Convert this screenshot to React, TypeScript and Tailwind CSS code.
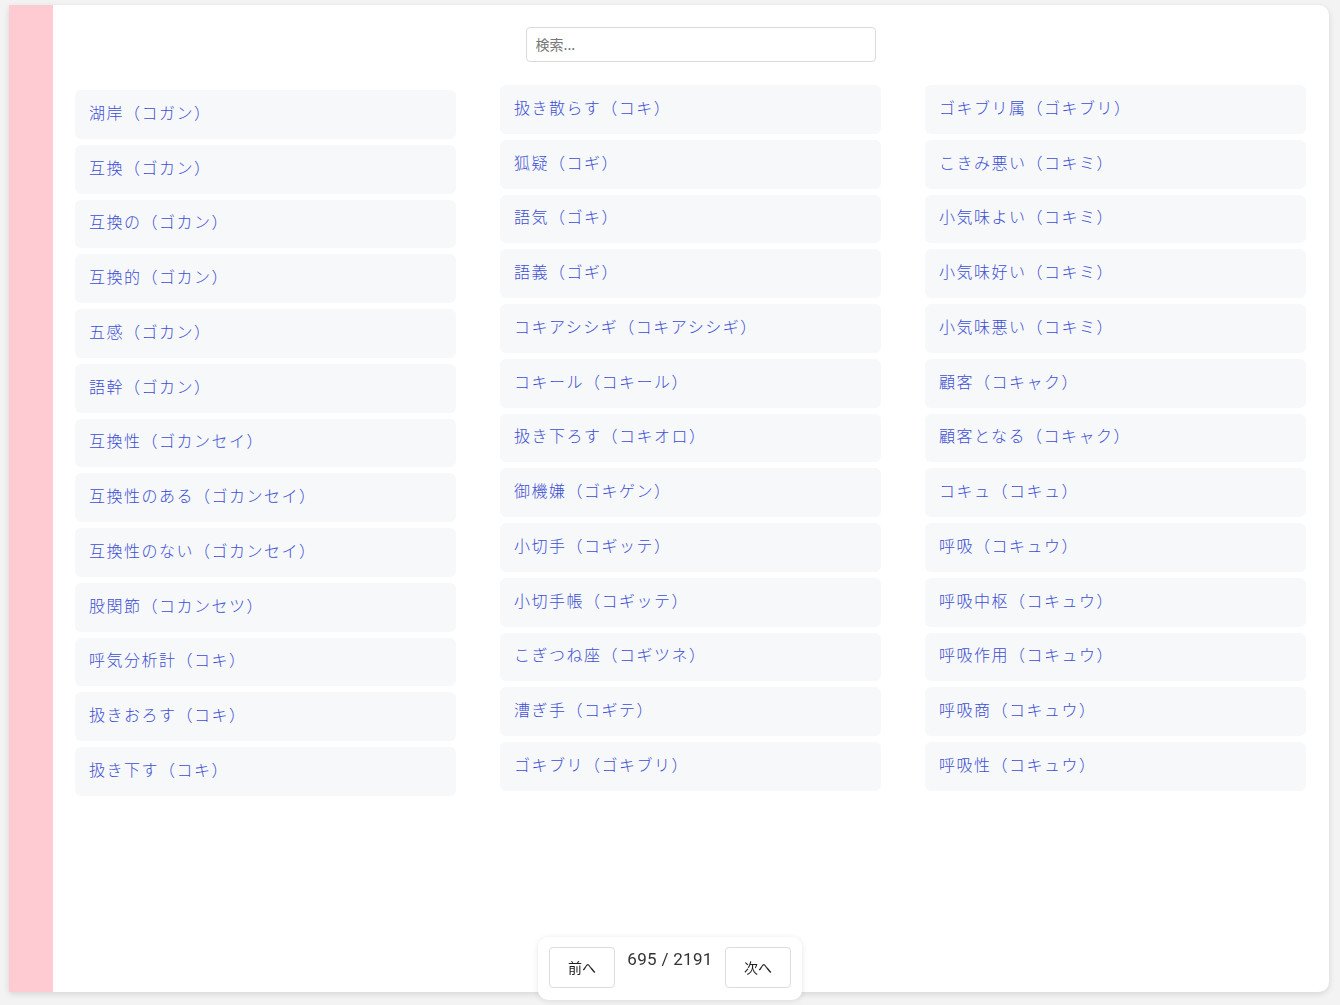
import React from 'react';

const columns: string[][] = [
  [
    '湖岸（コガン）',
    '互換（ゴカン）',
    '互換の（ゴカン）',
    '互換的（ゴカン）',
    '五感（ゴカン）',
    '語幹（ゴカン）',
    '互換性（ゴカンセイ）',
    '互換性のある（ゴカンセイ）',
    '互換性のない（ゴカンセイ）',
    '股関節（コカンセツ）',
    '呼気分析計（コキ）',
    '扱きおろす（コキ）',
    '扱き下す（コキ）',
  ],
  [
    '扱き散らす（コキ）',
    '狐疑（コギ）',
    '語気（ゴキ）',
    '語義（ゴギ）',
    'コキアシシギ（コキアシシギ）',
    'コキール（コキール）',
    '扱き下ろす（コキオロ）',
    '御機嫌（ゴキゲン）',
    '小切手（コギッテ）',
    '小切手帳（コギッテ）',
    'こぎつね座（コギツネ）',
    '漕ぎ手（コギテ）',
    'ゴキブリ（ゴキブリ）',
  ],
  [
    'ゴキブリ属（ゴキブリ）',
    'こきみ悪い（コキミ）',
    '小気味よい（コキミ）',
    '小気味好い（コキミ）',
    '小気味悪い（コキミ）',
    '顧客（コキャク）',
    '顧客となる（コキャク）',
    'コキュ（コキュ）',
    '呼吸（コキュウ）',
    '呼吸中枢（コキュウ）',
    '呼吸作用（コキュウ）',
    '呼吸商（コキュウ）',
    '呼吸性（コキュウ）',
  ],
];

function WordItem({ text }: { text: string }) {
  return (
    <div className="h-[48.75px] flex items-center px-[14px] pb-[5px] rounded-md bg-[#f7f8fa] text-[16px] font-light tracking-[1.5px] text-[#3c4fd2] [text-spacing-trim:space-all] cursor-pointer">
      {text}
    </div>
  );
}

export default function App() {
  return (
    <div
      className="min-h-screen bg-[#f3f3f3] pt-[5px] pl-[9px] pr-[11px]"
      style={{ fontFamily: '"Noto Sans CJK JP", "Noto Sans", sans-serif' }}
    >
      {/* カード */}
      <div className="h-[987px] flex bg-white rounded-r-[10px] shadow-[0_2px_6px_rgba(0,0,0,0.12)] overflow-hidden">
        <div className="w-[44px] bg-[#ffcbd3] shrink-0" />
        <div className="flex-1 pt-[22px] pl-[22px] pr-[23px]">
          {/* 検索 */}
          <div className="flex justify-center pl-[20px]">
            <input
              type="text"
              placeholder="検索..."
              className="w-[350px] h-[35px] border border-[#dadada] rounded-[4px] px-[9px] pb-[2px] text-[14px] text-[#333] placeholder:text-[#777] outline-none"
            />
          </div>

          {/* 単語リスト */}
          <div className="mt-[23px] grid grid-cols-[381px_381px_381px] justify-between items-start">
            {columns.map((col, i) => (
              <div key={i} className={`flex flex-col gap-[6px] ${i === 0 ? 'mt-[5px]' : ''}`}>
                {col.map((w) => (
                  <WordItem key={w} text={w} />
                ))}
              </div>
            ))}
          </div>
        </div>
      </div>

      {/* ページ送り */}
      <div className="fixed bottom-[5px] left-1/2 -translate-x-1/2 w-[264px] h-[63px] bg-white rounded-[10px] shadow-[0_1px_6px_rgba(0,0,0,0.1)] flex items-start pt-[10px] px-[11px] gap-[12px]">
        <button className="w-[66px] h-[41px] border border-[#dcdcdc] rounded-[4px] bg-white text-[14px] text-[#222]">
          前へ
        </button>
        <div
          className="flex-1 text-center text-[17px] text-[#333] tracking-[0.3px]"
          style={{ fontFamily: 'Roboto, "Noto Sans CJK JP", sans-serif' }}
        >
          695 / 2191
        </div>
        <button className="w-[66px] h-[41px] border border-[#dcdcdc] rounded-[4px] bg-white text-[14px] text-[#222]">
          次へ
        </button>
      </div>
    </div>
  );
}
